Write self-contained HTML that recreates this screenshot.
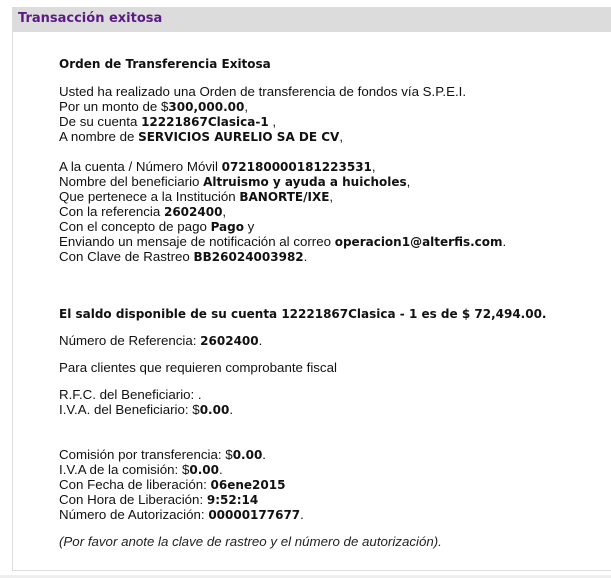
<!DOCTYPE html>
<html><head><meta charset="utf-8"><style>
html,body{margin:0;padding:0;background:#fff;width:611px;height:578px;overflow:hidden;position:relative}
body{font-family:"Liberation Sans",sans-serif;font-size:13.3px;color:#111}
.hdr{position:absolute;left:12px;top:7px;width:599px;height:25px;background:#dcdcdc}
.hdr span{position:absolute;left:6px;top:4px;font-family:"DejaVu Sans",sans-serif;font-weight:bold;font-size:13px;color:#5c1a86}
.box{position:absolute;left:12px;top:32px;width:610px;height:539px;border-left:1px solid #ddd;border-bottom:1px solid #ddd;box-sizing:border-box}
.foot{position:absolute;left:0;top:575px;width:611px;height:3px;background:#eee}
.g{position:absolute;left:59px;line-height:15px;white-space:nowrap}
b{font-family:"DejaVu Sans",sans-serif;font-size:12px;font-weight:bold;line-height:0}
.t{font-family:"DejaVu Sans",sans-serif;font-size:12px;font-weight:bold}
i{font-style:italic;color:#222}
</style></head><body>
<div class="hdr"><span>Transacción exitosa</span></div>
<div class="box"></div>
<div class="foot"></div>
<div class="g t" style="top:57px">Orden de Transferencia Exitosa</div>
<div class="g" style="top:84px">Usted ha realizado una Orden de transferencia de fondos vía S.P.E.I.<br>
Por un monto de $<b>300,000.00</b>,<br>
De su cuenta <b>12221867Clasica-1</b> ,<br>
A nombre de <b>SERVICIOS AURELIO SA DE CV</b>,</div>
<div class="g" style="top:159px">A la cuenta / Número Móvil <b>072180000181223531</b>,<br>
Nombre del beneficiario <b>Altruismo y ayuda a huicholes</b>,<br>
Que pertenece a la Institución <b>BANORTE/IXE</b>,<br>
Con la referencia <b>2602400</b>,<br>
Con el concepto de pago <b>Pago</b> y<br>
Enviando un mensaje de notificación al correo <b>operacion1@alterfis.com</b>.<br>
Con Clave de Rastreo <b>BB26024003982</b>.</div>
<div class="g" style="top:306px"><b>El saldo disponible de su cuenta 12221867Clasica - 1 es de $ 72,494.00.</b></div>
<div class="g" style="top:333px">Número de Referencia: <b>2602400</b>.</div>
<div class="g" style="top:360px">Para clientes que requieren comprobante fiscal</div>
<div class="g" style="top:387px">R.F.C. del Beneficiario: .<br>I.V.A. del Beneficiario: $<b>0.00</b>.</div>
<div class="g" style="top:447px">Comisión por transferencia: $<b>0.00</b>.<br>
I.V.A de la comisión: $<b>0.00</b>.<br>
Con Fecha de liberación: <b>06ene2015</b><br>
Con Hora de Liberación: <b>9:52:14</b><br>
Número de Autorización: <b>00000177677</b>.</div>
<div class="g" style="top:534px"><i>(Por favor anote la clave de rastreo y el número de autorización).</i></div>
</body></html>
